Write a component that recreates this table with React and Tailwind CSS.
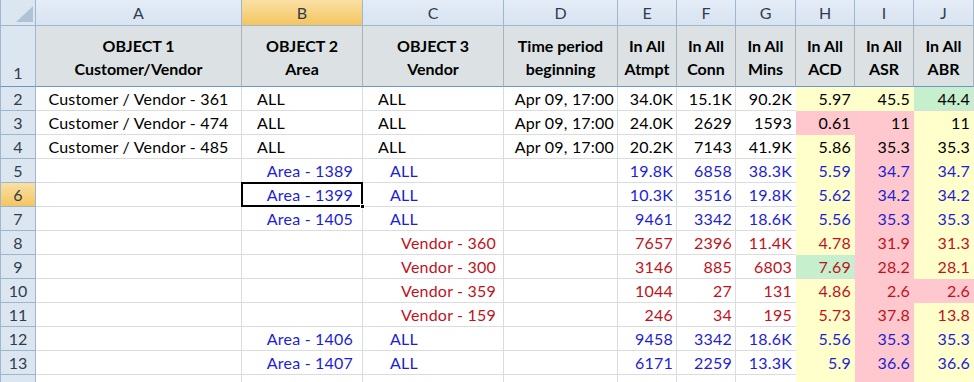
import React from "react"

const COLS = ["A", "B", "C", "D", "E", "F", "G", "H", "I", "J"]

const HEAD = [
  ["OBJECT 1", "Customer/Vendor"],
  ["OBJECT 2", "Area"],
  ["OBJECT 3", "Vendor"],
  ["Time period", "beginning"],
  ["In All", "Atmpt"],
  ["In All", "Conn"],
  ["In All", "Mins"],
  ["In All", "ACD"],
  ["In All", "ASR"],
  ["In All", "ABR"],
]

// y = yellow, r = red, g = green fill
const ROWS = [
  { n: 2, tone: "k", a: "Customer / Vendor - 361", b: "ALL", c: "ALL", d: "Apr 09, 17:00", v: ["34.0K", "15.1K", "90.2K", "5.97", "45.5", "44.4"], f: ["y", "y", "g"] },
  { n: 3, tone: "k", a: "Customer / Vendor - 474", b: "ALL", c: "ALL", d: "Apr 09, 17:00", v: ["24.0K", "2629", "1593", "0.61", "11", "11"], f: ["r", "r", "y"] },
  { n: 4, tone: "k", a: "Customer / Vendor - 485", b: "ALL", c: "ALL", d: "Apr 09, 17:00", v: ["20.2K", "7143", "41.9K", "5.86", "35.3", "35.3"], f: ["y", "r", "y"] },
  { n: 5, tone: "b", area: "Area - 1389", all: true, v: ["19.8K", "6858", "38.3K", "5.59", "34.7", "34.7"], f: ["y", "r", "y"] },
  { n: 6, tone: "b", area: "Area - 1399", all: true, sel: true, v: ["10.3K", "3516", "19.8K", "5.62", "34.2", "34.2"], f: ["y", "r", "y"] },
  { n: 7, tone: "b", area: "Area - 1405", all: true, v: ["9461", "3342", "18.6K", "5.56", "35.3", "35.3"], f: ["y", "r", "y"] },
  { n: 8, tone: "r", vendor: "Vendor - 360", v: ["7657", "2396", "11.4K", "4.78", "31.9", "31.3"], f: ["y", "r", "y"] },
  { n: 9, tone: "r", vendor: "Vendor - 300", v: ["3146", "885", "6803", "7.69", "28.2", "28.1"], f: ["g", "r", "y"] },
  { n: 10, tone: "r", vendor: "Vendor - 359", v: ["1044", "27", "131", "4.86", "2.6", "2.6"], f: ["y", "r", "r"] },
  { n: 11, tone: "r", vendor: "Vendor - 159", v: ["246", "34", "195", "5.73", "37.8", "13.8"], f: ["y", "r", "y"] },
  { n: 12, tone: "b", area: "Area - 1406", all: true, v: ["9458", "3342", "18.6K", "5.56", "35.3", "35.3"], f: ["y", "r", "y"] },
  { n: 13, tone: "b", area: "Area - 1407", all: true, v: ["6171", "2259", "13.3K", "5.9", "36.6", "36.6"], f: ["y", "r", "y"] },
]

const TONE = { k: "text-black", b: "text-[#1e1ed2]", r: "text-[#c0121c]" }
const FILL = {
  y: "bg-[#ffffcc] border-[#ffffcc]",
  r: "bg-[#ffc7ce] border-[#ffc7ce]",
  g: "bg-[#c6efce] border-[#c6efce]",
}

function Cell({ className = "", children }) {
  return (
    <div className={`relative flex items-center whitespace-nowrap border-r border-b border-[#dadcdd] pt-[1px] tracking-[0.2px] ${className}`}>
      {children}
    </div>
  )
}

function RowNum({ n, active }) {
  return (
    <div
      className={`flex items-center justify-center border-l border-r border-b border-[#9eb6ce] pt-[1px] text-[#2f3d4f] ${
        active ? "bg-gradient-to-b from-[#f9e0a4] to-[#f5c55c]" : "bg-[#dce6f1]"
      }`}
    >
      {n}
    </div>
  )
}

function DataRow({ row }) {
  const t = TONE[row.tone]
  return (
    <>
      <RowNum n={row.n} active={row.sel} />
      <Cell className={`justify-center ${t}`}>{row.a}</Cell>
      <Cell className={`${row.area ? "justify-end pr-[9px]" : "pl-[15px]"} ${t}`}>
        {row.b || row.area}
        {row.sel && (
          <div className="absolute z-10 -left-px -top-px -right-px -bottom-px border-2 border-black">
            <div className="absolute -right-[4px] -bottom-[4px] h-[5px] w-[5px] border border-white bg-black" />
          </div>
        )}
      </Cell>
      <Cell className={`${row.vendor ? "justify-end pr-[7px]" : row.all ? "pl-[27px]" : "pl-[15px]"} ${t}`}>
        {row.c || row.vendor || (row.all ? "ALL" : "")}
      </Cell>
      <Cell className={`justify-end pr-[3px] ${t}`}>{row.d}</Cell>
      {row.v.map((val, i) => (
        <Cell
          key={i}
          className={`justify-end pr-[3px] ${t} ${i >= 3 ? FILL[row.f[i - 3]] : ""} ${i === 2 ? "border-r-white" : ""}`}
        >
          {val}
        </Cell>
      ))}
    </>
  )
}

export default function App() {
  return (
    <div className="h-[382px] w-[974px] overflow-hidden bg-white font-['Lato','Liberation_Sans',sans-serif] text-[16px]">
      <div className="grid grid-cols-[36px_206px_121px_141px_114px_59px_59px_60px_59px_59px_60px] grid-rows-[26px_61px_repeat(12,24px)_24px]">
        {/* column letters */}
        <div className="relative border-l border-r border-b border-[#9eb6ce] bg-[#dce6f1]">
          <svg className="absolute right-[2px] bottom-[3px]" width="17" height="16" viewBox="0 0 17 16">
            <polygon points="17,0 17,16 0,16" fill="#b2c2d6" />
          </svg>
        </div>
        {COLS.map((c) => (
          <div
            key={c}
            className={`flex items-center justify-center border-r border-b border-[#9eb6ce] text-[#2f3d4f] ${
              c === "B" ? "bg-gradient-to-b from-[#f9e0a4] to-[#f5c55c]" : "bg-gradient-to-b from-[#e4ecf7] to-[#d8e4f1]"
            }`}
          >
            {c}
          </div>
        ))}

        {/* row 1 headers */}
        <div className="flex items-end justify-center border-l border-r border-b border-l-[#9eb6ce] border-r-[#9eb6ce] border-b-[#6d97c9] bg-[#dce6f1] pb-[1px] text-[#2f3d4f]">
          1
        </div>
        {HEAD.map(([l1, l2], i) => (
          <div
            key={i}
            className="flex flex-col items-center justify-center border-r border-b border-r-[#a9b3bb] border-b-[#6d97c9] bg-[#dce2e3] pt-[2px] text-center font-bold leading-[23px] text-black"
          >
            <span>{l1}</span>
            <span>{l2}</span>
          </div>
        ))}

        {ROWS.map((r) => (
          <DataRow key={r.n} row={r} />
        ))}

        {/* partial row 14, number hidden below the fold */}
        <RowNum n="" />
        {COLS.map((c, i) => (
          <Cell
            key={c}
            className={
              i === 7 ? FILL.y : i === 8 ? FILL.r : i === 9 ? FILL.y : i === 6 ? "border-r-white" : ""
            }
          />
        ))}
      </div>
    </div>
  )
}
